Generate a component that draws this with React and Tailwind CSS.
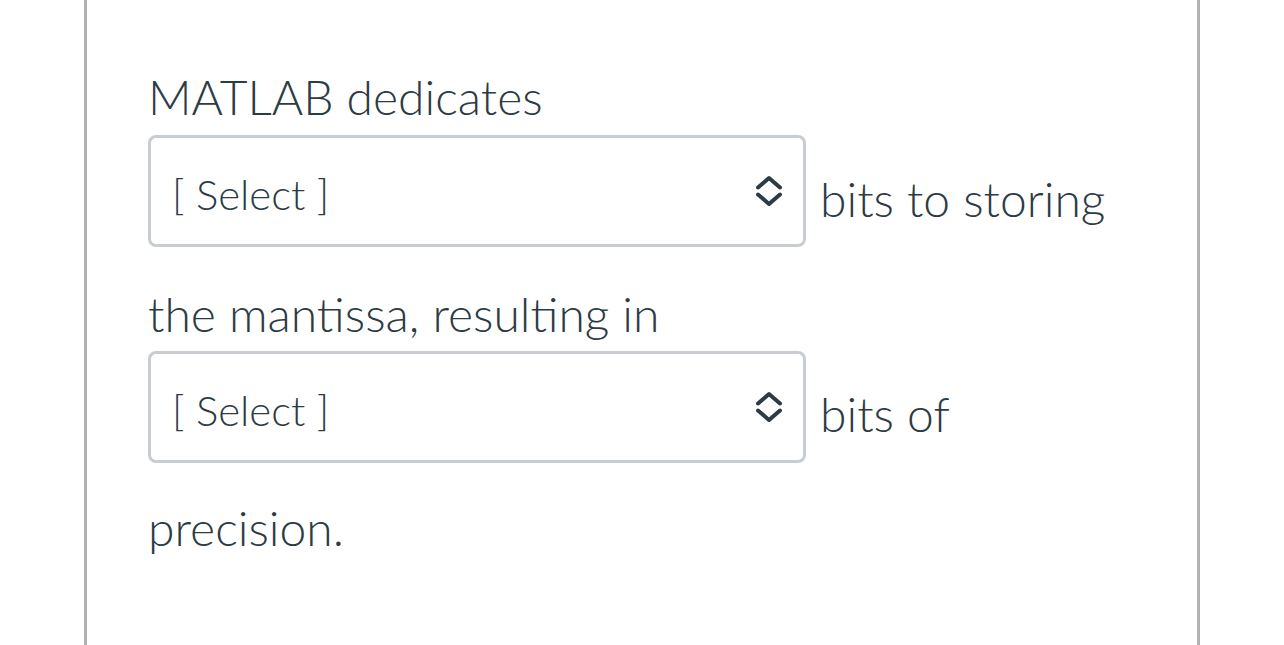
// Fill-in-the-blank question with two dropdowns
const font = { fontFamily: 'Lato, "Open Sans", sans-serif' }

function Chevrons() {
  return (
    <svg width="28" height="32" viewBox="0 0 28 32" fill="none" stroke="#2d3b45" strokeWidth="4" strokeLinecap="round" strokeLinejoin="round">
      <path d="M3 12.5 L14 3 L25 12.5" />
      <path d="M3 19.5 L14 29 L25 19.5" />
    </svg>
  )
}

function Dropdown() {
  return (
    <div className="flex items-center justify-between w-[658px] h-[112px] shrink-0 rounded-[8px] border-[3px] border-[#c7cdd1] bg-white pl-[21px] pr-[20px]">
      <span className="pt-[5px] text-[42px] leading-[50px] font-light text-[#2d3b45]">[ Select ]</span>
      <Chevrons />
    </div>
  )
}

export default function App() {
  return (
    <div className="w-full h-[645px] bg-white overflow-hidden" style={font}>
      <div className="ml-[84px] w-[1116px] h-full border-x-[3px] border-[#b1b1b1] pl-[61px] text-[#2d3b45] font-light text-[48px] leading-[58px]">
        <p className="pt-[68px]">MATLAB dedicates</p>

        <div className="flex items-start mt-[9px]">
          <Dropdown />
          <span className="ml-[14px] mt-[35px]">bits to storing</span>
        </div>

        <p className="mt-[38px]">the mantissa, resulting in</p>

        <div className="flex items-start mt-[8px]">
          <Dropdown />
          <span className="ml-[14px] mt-[34px]">bits of</span>
        </div>

        <p className="mt-[36px]">precision.</p>
      </div>
    </div>
  )
}
